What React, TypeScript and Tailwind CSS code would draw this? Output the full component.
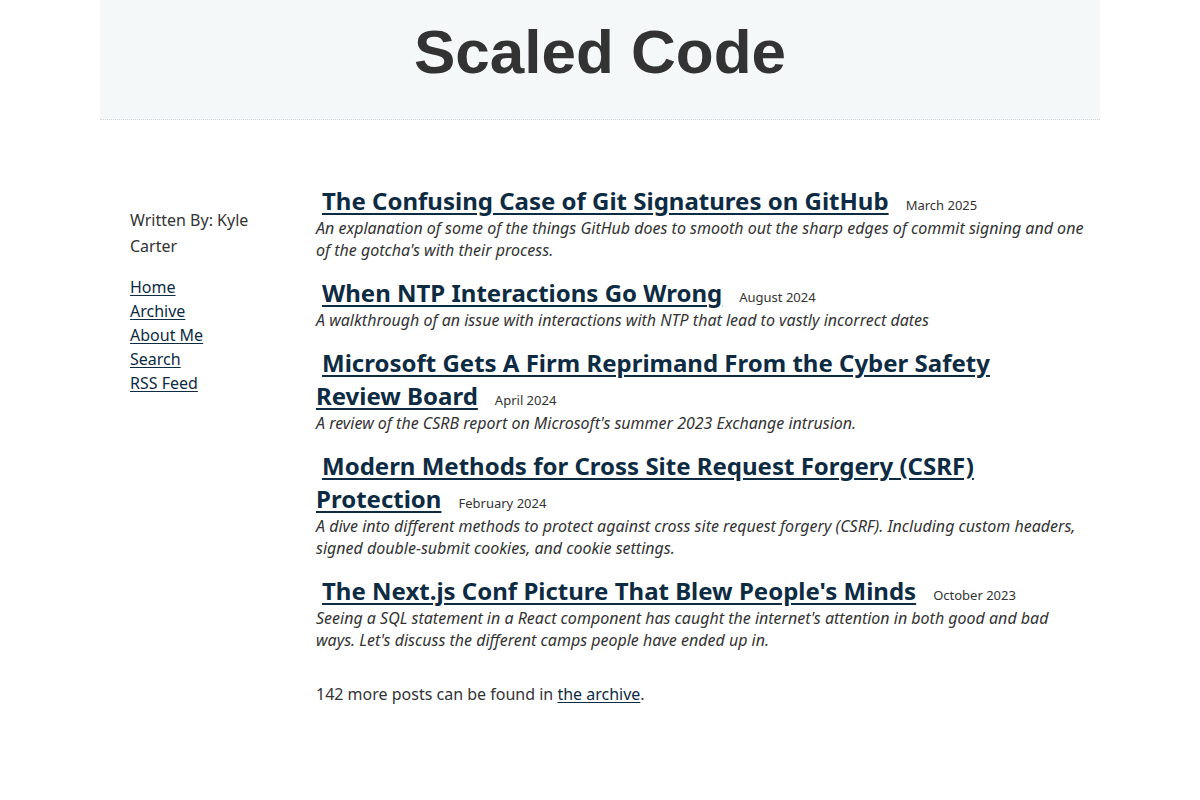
import React from "react";

type Post = { title: string; date: string; summary: string };

const posts: Post[] = [
  {
    title: "The Confusing Case of Git Signatures on GitHub",
    date: "March 2025",
    summary:
      "An explanation of some of the things GitHub does to smooth out the sharp edges of commit signing and one of the gotcha's with their process.",
  },
  {
    title: "When NTP Interactions Go Wrong",
    date: "August 2024",
    summary: "A walkthrough of an issue with interactions with NTP that lead to vastly incorrect dates",
  },
  {
    title: "Microsoft Gets A Firm Reprimand From the Cyber Safety Review Board",
    date: "April 2024",
    summary: "A review of the CSRB report on Microsoft's summer 2023 Exchange intrusion.",
  },
  {
    title: "Modern Methods for Cross Site Request Forgery (CSRF) Protection",
    date: "February 2024",
    summary:
      "A dive into different methods to protect against cross site request forgery (CSRF). Including custom headers, signed double-submit cookies, and cookie settings.",
  },
  {
    title: "The Next.js Conf Picture That Blew People's Minds",
    date: "October 2023",
    summary:
      "Seeing a SQL statement in a React component has caught the internet's attention in both good and bad ways. Let's discuss the different camps people have ended up in.",
  },
];

const navLinks = ["Home", "Archive", "About Me", "Search", "RSS Feed"];

export default function App() {
  return (
    <div className="min-h-[800px] bg-white text-[#333] font-['Noto_Sans',sans-serif]">
      <div className="mx-auto w-[1000px]">
        <header className="h-[120px] bg-[#f5f8f9] border-b border-dotted border-[#c9d5d9] flex justify-center">
          <h1 className="mt-[14px] text-[62px] leading-[76px] font-bold text-[#333] font-['Liberation_Sans',Arial,sans-serif]">
            Scaled Code
          </h1>
        </header>

        <div className="flex pt-[64px]">
          <aside className="w-[216px] shrink-0 pl-[30px] pt-[23px]">
            <p className="w-[130px] text-[16px] leading-[26px]">Written By: Kyle Carter</p>
            <ul className="mt-[16px] text-[16px] leading-[24px]">
              {navLinks.map((l) => (
                <li key={l}>
                  <a href="#" className="text-[#0d2b42] underline underline-offset-2">
                    {l}
                  </a>
                </li>
              ))}
            </ul>
          </aside>

          <main className="w-[774px]">
            {posts.map((p) => (
              <article key={p.title} className="mb-[15px]">
                <h2 className="pr-[24px] text-[24px] leading-[33px] font-bold">
                  <a href="#" className="ml-[6px] text-[#0d2b42] underline underline-offset-[3px]">
                    {p.title}
                  </a>
                  <span className="ml-[17px] text-[13px] leading-none font-normal text-[#333]">{p.date}</span>
                </h2>
                <p className="text-[16px] leading-[22px] italic">{p.summary}</p>
              </article>
            ))}
            <p className="mt-[31px] text-[16px] leading-[24px]">
              142 more posts can be found in{" "}
              <a href="#" className="text-[#0d2b42] underline underline-offset-2">
                the archive
              </a>
              .
            </p>
          </main>
        </div>
      </div>
    </div>
  );
}
